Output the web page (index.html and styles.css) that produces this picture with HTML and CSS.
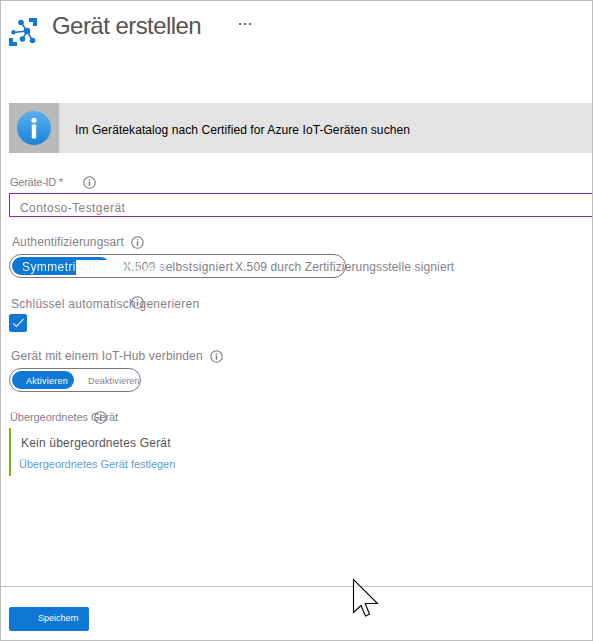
FILE: index.html
```html
<!DOCTYPE html>
<html lang="de">
<head>
<meta charset="utf-8">
<title>Gerät erstellen</title>
<link rel="stylesheet" href="styles.css">
</head>
<body>
<svg class="defs" width="0" height="0">
  <symbol id="info" viewBox="0 0 13 13">
    <circle cx="6.5" cy="6.5" r="5.7" fill="none" stroke="currentColor" stroke-width="1.1"/>
    <path d="M6.500 5.400V9.800M6.500 3.200V4.500" stroke="currentColor" stroke-width="1.500"/>
  </symbol>
</svg>
<main class="panel">
  <header class="head">
    <svg class="logo" width="28" height="28" viewBox="0 0 28 28">
      <path d="M20 0h8v8h-4V4h-4zM0 20h4v4h4v4H0z" fill="#0f78d4"/>
      <path d="M18 13 12 4.500M18 13 4.500 14.500M18 13 13.500 21M18 13 23.500 22.500" stroke="#1b75bc" stroke-width="1.500"/>
      <g fill="#0f78d4"><circle cx="18" cy="13" r="3.200"/><circle cx="12" cy="4.500" r="2.800"/><circle cx="4.500" cy="14.300" r="2.200"/><circle cx="13.500" cy="21" r="2.800"/><circle cx="23.500" cy="22.500" r="2.800"/></g>
    </svg>
    <h1 class="title">Gerät erstellen</h1>
    <span class="more"><i></i><i></i><i></i></span>
  </header>
  <section class="banner">
    <div class="banner-icon">
      <svg width="34" height="34" viewBox="0 0 34 34">
        <defs><linearGradient id="blue" x2="0" y2="1"><stop stop-color="#58b1ef"/><stop offset="1" stop-color="#1b83d8"/></linearGradient></defs>
        <circle cx="17" cy="17" r="17" fill="url(#blue)"/>
        <circle cx="17" cy="9.300" r="2.600" fill="#fff"/><rect x="14.800" y="13.500" width="4.400" height="14" rx=".8" fill="#fff"/>
      </svg>
    </div>
    <span class="banner-text">Im Gerätekatalog nach Certified for Azure IoT-Geräten suchen</span>
  </section>
  <div class="label label-id"><span>Geräte-ID *</span><svg class="info"><use href="#info"/></svg></div>
  <div class="field">Contoso-Testgerät</div>
  <div class="label label-auth"><span>Authentifizierungsart</span><svg class="info"><use href="#info"/></svg></div>
  <div class="pill auth">
    <span class="choice first"><i class="blob"></i><span class="fade">Symmetrischer Schlüssel</span></span>
    <span class="choice self">X.509 selbstsigniert</span>
    <span class="choice ca">X.509 durch Zertifizierungsstelle signiert</span>
  </div>
  <div class="label label-key"><span>Schlüssel automatisch generieren</span><svg class="info over-key"><use href="#info"/></svg></div>
  <div class="check"><svg width="18" height="18" viewBox="0 0 18 18"><path d="M4 9.300 7.500 12.500 14.500 5" fill="none" stroke="#d8eafa" stroke-width="1.200"/></svg></div>
  <div class="label label-hub"><span>Gerät mit einem IoT-Hub verbinden</span><svg class="info"><use href="#info"/></svg></div>
  <div class="pill hub"><span class="on">Aktivieren</span><span class="off">Deaktivieren</span></div>
  <div class="label label-parent"><span>Übergeordnetes Gerät</span><svg class="info over-parent"><use href="#info"/></svg></div>
  <div class="parent"><span class="none">Kein übergeordnetes Gerät</span><a class="link">Übergeordnetes Gerät festlegen</a></div>
  <footer class="foot"><button class="save">Speichern</button></footer>
  <svg class="cursor" width="27" height="40" viewBox="0 0 27 40"><path d="M1.500 1.500V34.500L9 27.500 13.500 38 17.500 36.300 13.200 25.500H25.500Z" fill="#fff" stroke="#000" stroke-width="1.100"/></svg>
</main>
</body>
</html>
```

FILE: styles.css
```css
* { box-sizing: border-box; }
body { margin: 0; background: #fff; font-family: "Liberation Sans", Arial, sans-serif; }
.defs { position: absolute; }
.panel { position: relative; width: 593px; height: 641px; border: 1px solid #bdbdbd; padding-left: 8px; display: flex; flex-direction: column; overflow: hidden; }
.panel > * { flex-shrink: 0; }
.head { display: flex; align-items: flex-start; height: 102px; }
.logo { margin-top: 17px; }
.title { margin: 9px 0 0 15px; width: 187px; font-size: 24px; line-height: 32px; font-weight: 400; letter-spacing: -.55px; color: #555; white-space: nowrap; }
.more { display: flex; gap: 3px; margin-top: 22px; }
.more i { width: 2px; height: 2px; background: #666; }
.banner { display: flex; align-items: center; height: 50px; background: #e3e3e3; }
.banner-icon { width: 50px; height: 50px; margin-right: 16px; background: #bababa; display: flex; align-items: center; justify-content: center; }
.banner-text { font-size: 12px; letter-spacing: .08px; color: #000; padding-top: 3px; }
.label { position: relative; display: flex; align-items: center; height: 14px; font-size: 12px; line-height: 14px; color: #84818a; white-space: nowrap; }
.info { width: 13px; height: 13px; color: #7c7c7c; flex: none; }
.label-id { margin-top: 22px; padding-left: 1px; font-size: 11px; letter-spacing: -.25px; gap: 20px; }
.field { height: 24px; margin-top: 4px; border: 1px solid #8a2da5; border-right: 0; padding: 3px 0 0 10px; font-size: 12px; line-height: 22px; letter-spacing: .43px; color: #84818a; }
.label-auth { margin-top: 18px; padding-left: 3px; letter-spacing: .12px; gap: 7px; }
.pill { display: flex; align-items: center; height: 24px; border: 1px solid #777; border-radius: 12px; white-space: nowrap; color: #84818a; }
.auth { width: 337px; margin-top: 5px; font-size: 12px; }
.choice { line-height: 18px; }
.first { display: grid; flex: none; width: 113px; height: 18px; padding-left: 2px; letter-spacing: .4px; }
.blob, .fade { grid-area: 1 / 1; }
.blob { width: 98px; height: 18px; border-radius: 9px; background: #0f78d4; clip-path: polygon(0 0, 100% 0, 100% 3px, 64px 3px, 64px 100%, 0 100%); }
.fade { position: relative; justify-self: start; margin-left: 10px; line-height: 20px; color: transparent; background: linear-gradient(90deg, #fff 54px, #e4fbfb 54px); background-clip: text; -webkit-background-clip: text; }
.self { letter-spacing: .28px; flex: none; width: 112px; padding-top: 2px; }
.ca { letter-spacing: .14px; padding: 2px 0 0 0; }
.label-key { margin-top: 19px; padding-left: 2px; letter-spacing: .26px; }
.over-key { position: absolute; left: 122px; top: -1px; }
.check { width: 18px; height: 18px; margin-top: 3px; border-radius: 2px; background: #0f78d4; }
.check svg { display: block; }
.label-hub { margin-top: 17px; padding-left: 2px; letter-spacing: .13px; gap: 7px; }
.hub { width: 132px; margin-top: 5px; font-size: 9px; }
.on { width: 62px; height: 18px; margin-left: 2px; padding-left: 14px; border-radius: 9px; background: #0f78d4; color: #fff; line-height: 20px; letter-spacing: .25px; }
.off { padding-left: 14px; line-height: 20px; letter-spacing: .13px; padding-top: 1px; }
.label-parent { margin-top: 18px; padding-left: 1px; font-size: 11px; letter-spacing: -.07px; }
.over-parent { position: absolute; left: 85px; top: 1px; }
.parent { display: flex; flex-direction: column; height: 48px; margin-top: 4px; border-left: 2px solid #7ab51d; }
.none { padding: 8px 0 0 10px; font-size: 12px; line-height: 14px; letter-spacing: .2px; color: #555; }
.link { padding: 7px 0 0 8px; font-size: 11px; line-height: 14px; letter-spacing: -.03px; color: #659ad2; }
.foot { margin: auto 0 0 -8px; height: 54px; border-top: 1px solid #bdbdbd; padding: 20px 0 0 8px; }
.save { display: block; width: 80px; height: 24px; padding: 0 0 2px 29px; border: 0; border-radius: 2px; background: #0f78d4; color: #fff; font: 9px "Liberation Sans", Arial, sans-serif; text-align: left; }
.cursor { position: absolute; left: 351px; top: 577px; }
```
